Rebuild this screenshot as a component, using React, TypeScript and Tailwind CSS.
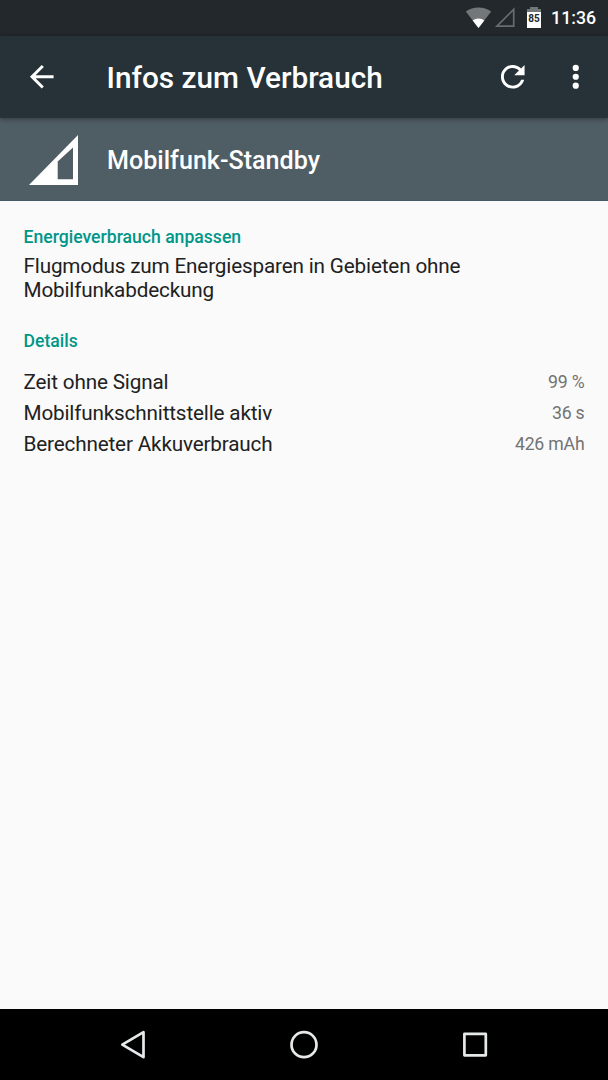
interface DetailRow {
  label: string;
  value: string;
}

const details: DetailRow[] = [
  { label: "Zeit ohne Signal", value: "99 %" },
  { label: "Mobilfunkschnittstelle aktiv", value: "36 s" },
  { label: "Berechneter Akkuverbrauch", value: "426 mAh" },
];

function StatusBar() {
  return (
    <div className="flex h-[35.5px] shrink-0 items-center justify-end bg-[#22282b] pr-3 text-white">
      <svg className="h-[22px] w-[27px]" viewBox="0 0 27 22">
        <path d="M13.5 21L0.8 4.4C8 -0.9 19 -0.9 26.2 4.4Z" fill="#72777a" />
        <path d="M13.5 21L7.7 13.4C11 10.7 16 10.7 19.3 13.4Z" fill="#fff" />
      </svg>
      <svg className="ml-[1px] h-[21px] w-[23px]" viewBox="0 0 23 21">
        <path d="M20.7 2.4V19.2H3.9Z" fill="none" stroke="#666c6f" strokeWidth="1.7" />
      </svg>
      <div className="ml-[11px] flex flex-col items-center">
        <div className="h-[2px] w-[8px] bg-[#72777a]" />
        <div className="h-[3px] w-[14px] bg-[#72777a]" />
        <div className="flex h-[16px] w-[14px] items-center justify-center bg-white pb-[3px] text-[10px] leading-none font-bold text-[#22282b]">
          85
        </div>
      </div>
      <span className="mt-[2px] ml-[10px] text-[17.7px] leading-none font-medium">11:36</span>
    </div>
  );
}

function Toolbar() {
  return (
    <header className="relative flex h-[82.5px] shrink-0 items-center bg-[#263238] pl-6 text-white shadow-[0_1px_5px_rgba(0,0,0,0.4)]">
      <svg className="h-[35.5px] w-[35.5px]" viewBox="0 0 24 24" fill="currentColor">
        <path d="M20 11H7.83l5.59-5.59L12 4l-8 8 8 8 1.41-1.41L7.83 13H20v-2z" />
      </svg>
      <h1 className="mt-[3px] ml-[47px] flex-1 text-[29.75px] leading-none font-medium">Infos zum Verbrauch</h1>
      <svg className="h-[35.5px] w-[35.5px]" viewBox="0 0 24 24" fill="currentColor">
        <path d="M17.65 6.35C16.2 4.9 14.21 4 12 4c-4.42 0-7.99 3.58-7.99 8s3.57 8 7.99 8c3.73 0 6.84-2.55 7.73-6h-2.08c-.82 2.33-3.04 4-5.65 4-3.31 0-6-2.69-6-6s2.69-6 6-6c1.66 0 3.14.69 4.22 1.78L13 11h7V4l-2.35 2.35z" />
      </svg>
      <svg className="mr-[15px] ml-[27px] h-[35.5px] w-[35.5px]" viewBox="0 0 24 24" fill="currentColor">
        <circle cx="12" cy="6" r="2.1" />
        <circle cx="12" cy="12" r="2.1" />
        <circle cx="12" cy="18" r="2.1" />
      </svg>
    </header>
  );
}

function AppHeader() {
  return (
    <div className="flex h-[83px] shrink-0 items-center border-b border-[#455a64] bg-[#4f5d64] text-white">
      <svg className="mt-[1px] ml-[28px] h-[50px] w-[51px]" viewBox="0 0 51 50" fill="#fff">
        <path fillRule="evenodd" d="M50 0V50H1ZM45 12.5L29.7 26.5V44.3H45Z" />
      </svg>
      <h2 className="mt-[4px] ml-[28px] text-[25.1px] leading-none font-medium">Mobilfunk-Standby</h2>
    </div>
  );
}

function NavBar() {
  return (
    <nav className="flex h-[71px] shrink-0 items-center justify-between bg-black px-[118px]">
      <svg className="h-[30px] w-[30px]" viewBox="0 0 30 30" fill="none" stroke="#e6e9e9" strokeWidth="2.7" strokeLinejoin="round">
        <path d="M25.5 2.2V27.2L4.3 14.7Z" />
      </svg>
      <svg className="h-[30px] w-[30px]" viewBox="0 0 30 30" fill="none" stroke="#e6e9e9" strokeWidth="2.7">
        <circle cx="15" cy="14.7" r="12.5" />
      </svg>
      <svg className="h-[30px] w-[30px]" viewBox="0 0 30 30" fill="none" stroke="#e6e9e9" strokeWidth="2.7" strokeLinejoin="round">
        <path d="M4.4 3.9H25.8V25.3H4.4Z" />
      </svg>
    </nav>
  );
}

export default function App() {
  return (
    <div className="flex h-[1080px] w-[608px] flex-col overflow-hidden bg-[#fafafa] font-['Roboto',sans-serif]">
      <StatusBar />
      <Toolbar />
      <AppHeader />
      <main className="flex-1 px-[23.5px] pt-[24px] text-[#212121]">
        <h3 className="text-[17.6px] leading-[24px] font-medium text-[#009688]">Energieverbrauch anpassen</h3>
        <p className="mt-[5px] text-[20.7px] leading-[24px] tracking-[-0.16px]">
          Flugmodus zum Energiesparen in Gebieten ohne Mobilfunkabdeckung
        </p>
        <h3 className="mt-[27px] text-[17.6px] leading-[24px] font-medium text-[#009688]">Details</h3>
        <div className="mt-[13px]">
          {details.map((row) => (
            <div key={row.label} className="flex h-[31px] items-center justify-between">
              <span className="text-[20.7px] leading-[24px] tracking-[-0.16px]">{row.label}</span>
              <span className="text-[17.7px] leading-[24px] tracking-[-0.2px] text-[#737373]">{row.value}</span>
            </div>
          ))}
        </div>
      </main>
      <NavBar />
    </div>
  );
}
